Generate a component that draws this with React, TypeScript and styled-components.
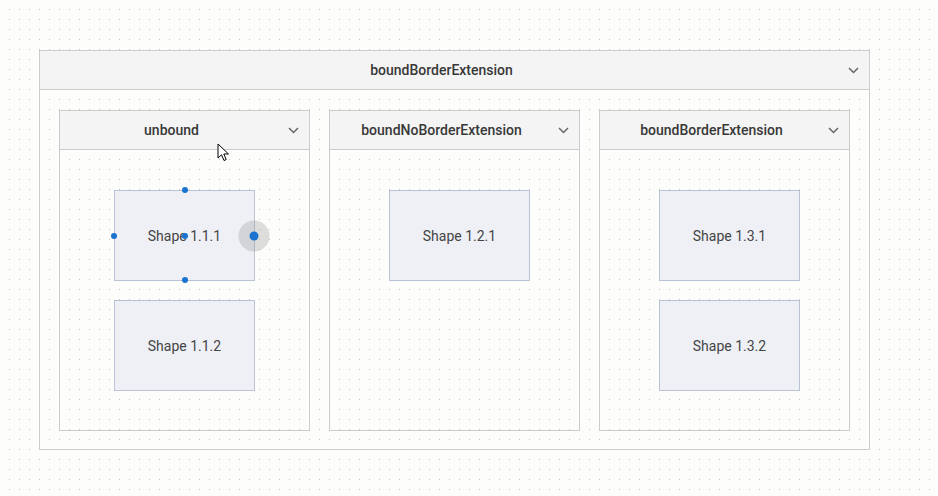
import React from "react";
import styled, {createGlobalStyle} from "styled-components";

const GlobalStyle = createGlobalStyle`
  html, body {
    margin: 0;
    padding: 0;
    width: 100%;
    height: 100%;
  }
  body {
    font-family: Roboto, "Liberation Sans", Arial, sans-serif;
    background-color: #fdfdfc;
    background-image: radial-gradient(circle at 0.5px 0.5px, #c2c2c2 0.8px, transparent 0.9px);
    background-size: 10px 10px;
    background-position: 9px 9px;
  }
`;

const Canvas = styled.div`
  width: 938px;
  height: 496px;
  box-sizing: border-box;
  padding: 50px 0 0 39px;
  position: relative;
`;

const Container = styled.div<{ $width: number; $height: number }>`
  box-sizing: border-box;
  width: ${p => p.$width}px;
  height: ${p => p.$height}px;
  border: 1px solid #cccccc;
  display: flex;
  flex-direction: column;
`;

const Header = styled.div`
  height: 38px;
  background: #f4f4f4;
  border-bottom: 1px solid #cccccc;
  display: flex;
  align-items: center;
  flex-shrink: 0;
`;

const Title = styled.div`
  flex: 1;
  text-align: center;
  font-size: 14px;
  font-weight: 500;
  color: #383838;
  white-space: nowrap;
`;

const ChevronBox = styled.div`
  width: 26px;
  padding-left: 5px;
  box-sizing: border-box;
  display: flex;
  align-items: center;
`;

const OuterBody = styled.div`
  display: flex;
  gap: 19px;
  padding: 20px 19px 18px 19px;
`;

const InnerBody = styled.div<{ $shift: number }>`
  flex: 1;
  display: flex;
  flex-direction: column;
  align-items: center;
  padding-top: 40px;
  padding-left: ${p => p.$shift * 2}px;
  gap: 19px;
`;

const Shape = styled.div`
  position: relative;
  width: 141px;
  height: 91px;
  box-sizing: border-box;
  background: #eef0f6;
  border: 1px solid #bac2d6;
  display: flex;
  align-items: center;
  justify-content: center;
  font-size: 14px;
  color: #444444;
`;

const Handle = styled.div<{ $x: string; $y: string; $big?: boolean }>`
  position: absolute;
  left: ${p => p.$x};
  top: ${p => p.$y};
  width: ${p => p.$big ? 9 : 6}px;
  height: ${p => p.$big ? 9 : 6}px;
  border-radius: 50%;
  background: #1a73cf;
  transform: translate(-50%, -50%);
  z-index: 2;
`;

const Halo = styled.div<{ $x: string; $y: string }>`
  position: absolute;
  left: ${p => p.$x};
  top: ${p => p.$y};
  width: 31px;
  height: 31px;
  border-radius: 50%;
  background: rgba(160, 160, 160, 0.35);
  transform: translate(-50%, -50%);
  z-index: 1;
`;

const Cursor = styled.svg`
  position: absolute;
  left: 217px;
  top: 143px;
  z-index: 5;
`;

const Chevron = () => (
    <svg width="11" height="7" viewBox="0 0 11 7">
        <path d="M1 1 L5.5 5.5 L10 1" fill="none" stroke="#666" strokeWidth="1.5"/>
    </svg>
);

const columns = [
    {title: 'unbound', shift: 0, shapes: ['Shape 1.1.1', 'Shape 1.1.2']},
    {title: 'boundNoBorderExtension', shift: 5, shapes: ['Shape 1.2.1']},
    {title: 'boundBorderExtension', shift: 5, shapes: ['Shape 1.3.1', 'Shape 1.3.2']},
];

const Selection = () => (
    <>
        <Handle $x="50%" $y="-1px"/>
        <Handle $x="-1px" $y="50%"/>
        <Handle $x="50%" $y="100%"/>
        <Handle $x="50%" $y="50%"/>
        <Halo $x="100%" $y="50%"/>
        <Handle $x="100%" $y="50%" $big/>
    </>
);

const App = () => {
    return (
        <Canvas>
            <GlobalStyle/>
            <Container $width={831} $height={400}>
                <Header>
                    <Title>boundBorderExtension</Title>
                    <ChevronBox><Chevron/></ChevronBox>
                </Header>
                <OuterBody>
                    {columns.map(col => (
                        <Container key={col.title} $width={251} $height={321}>
                            <Header>
                                <Title>{col.title}</Title>
                                <ChevronBox><Chevron/></ChevronBox>
                            </Header>
                            <InnerBody $shift={col.shift}>
                                {col.shapes.map(s => (
                                    <Shape key={s}>
                                        {s}
                                        {s === 'Shape 1.1.1' && <Selection/>}
                                    </Shape>
                                ))}
                            </InnerBody>
                        </Container>
                    ))}
                </OuterBody>
            </Container>
            <Cursor width="13" height="19" viewBox="0 0 13 19">
                <path d="M1 1 L1 15 L4.5 11.8 L7 17.5 L9.2 16.5 L6.8 11 L11.5 11 Z"
                      fill="#fff" stroke="#000" strokeWidth="1" strokeLinejoin="round"/>
            </Cursor>
        </Canvas>
    );
};

export default App;
